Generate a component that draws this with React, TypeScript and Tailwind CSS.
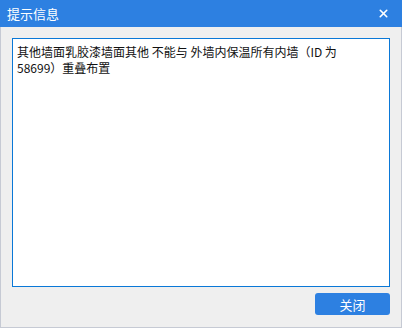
import { X } from "lucide-react";

const font = { fontFamily: '"Noto Sans CJK SC", "Noto Sans", sans-serif' };

const MessageDialog = () => {
  return (
    <div
      className="w-[402px] h-[328px] flex flex-col bg-[#efefef] border-x border-b border-[#c6cad4]"
      style={font}
    >
      <div className="h-[27px] -mx-px flex items-center justify-between bg-[#2d80e1] text-white pl-[7px] pr-[12px]">
        <p className="text-[13px] leading-none">提示信息</p>
        <X size={13} strokeWidth={3} />
      </div>

      <div className="flex-1 flex flex-col px-[11px] pt-[11px]">
        <div className="h-[249px] bg-white border border-[#0a78d7] px-[4px] pt-[5px] text-[12px] leading-[16px] text-[#111]">
          其他墙面乳胶漆墙面其他 不能与 外墙内保温所有内墙（ID 为
          <br />
          58699）重叠布置
        </div>
        <div className="flex justify-end mt-[6px]">
          <button className="w-[75px] h-[22px] rounded-[3px] bg-[#2d80e1] text-white text-[13px] leading-none">
            关闭
          </button>
        </div>
      </div>
    </div>
  );
};

export default function App() {
  return <MessageDialog />;
}
